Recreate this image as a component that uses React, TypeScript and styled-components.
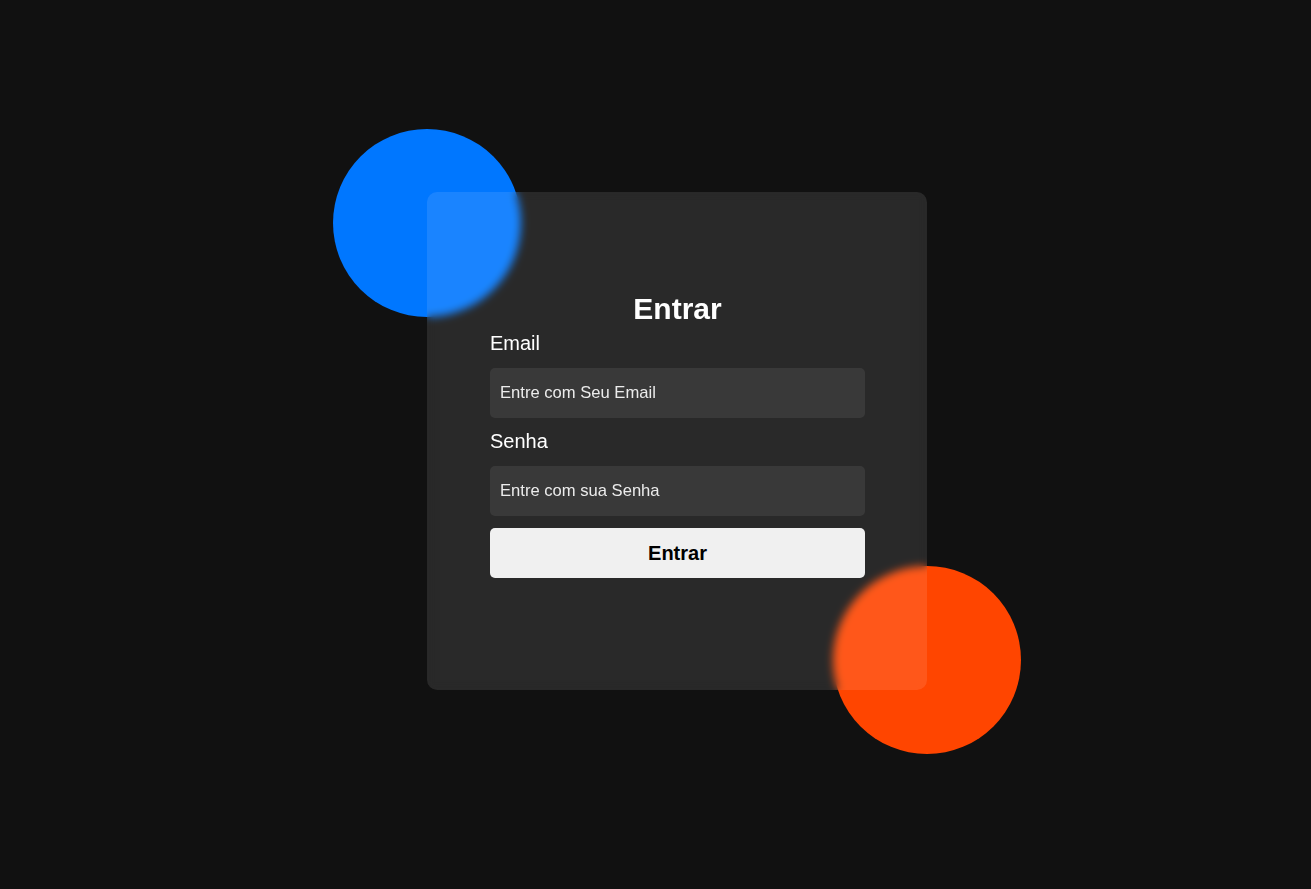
import React from "react";
import styled, { createGlobalStyle } from "styled-components";

const GlobalStyle = createGlobalStyle`
  * { box-sizing: border-box; }
  html, body { margin: 0; padding: 0; background: #111111; }
  body { font-family: "Liberation Sans", Arial, sans-serif; }
`;

const Page = styled.main`
  height: 889px;
  display: flex;
  align-items: center;
  justify-content: center;
  padding-left: 43px;
  padding-bottom: 7px;
  overflow: hidden;
`;

const Stage = styled.div`
  position: relative;
  width: 500px;
  height: 498px;
`;

const Circle = styled.div<{ $color: string; $pos: string }>`
  position: absolute;
  width: 188px;
  height: 188px;
  border-radius: 50%;
  background: ${(p) => p.$color};
  ${(p) => p.$pos}
`;

const Card = styled.section`
  position: relative;
  z-index: 1;
  width: 100%;
  height: 100%;
  border-radius: 10px;
  background: rgba(255, 255, 255, 0.1);
  backdrop-filter: blur(4px);
  -webkit-backdrop-filter: blur(4px);
  padding: 100px 62px 0 63px;
`;

const Form = styled.form`
  display: flex;
  flex-direction: column;
`;

const Title = styled.h2`
  margin: 0 0 7px;
  font-size: 30px;
  line-height: 33px;
  font-weight: 700;
  color: #ffffff;
  text-align: center;
`;

const Label = styled.label`
  font-size: 20px;
  line-height: 23px;
  color: #ffffff;
  margin-bottom: 13px;
`;

const Input = styled.input`
  height: 50px;
  border: none;
  outline: none;
  border-radius: 5px;
  background: rgba(255, 255, 255, 0.08);
  color: #ffffff;
  font-family: "Liberation Sans", Arial, sans-serif;
  font-size: 16.6px;
  padding: 0 10px;
  margin-bottom: 12px;
  &::placeholder {
    color: #ececec;
  }
`;

const Button = styled.button`
  height: 50px;
  border: none;
  border-radius: 5px;
  background: #f0f0f0;
  color: #000000;
  font-family: "Liberation Sans", Arial, sans-serif;
  font-size: 20px;
  font-weight: 700;
  cursor: pointer;
`;

export default function App() {
  return (
    <>
      <GlobalStyle />
      <Page>
        <Stage>
          <Circle $color="#0077ff" $pos="left: -94px; top: -63px;" />
          <Circle $color="#ff4500" $pos="right: -94px; bottom: -64px;" />
          <Card>
            <Form onSubmit={(e) => e.preventDefault()}>
              <Title>Entrar</Title>
              <Label htmlFor="email">Email</Label>
              <Input id="email" type="email" placeholder="Entre com Seu Email" />
              <Label htmlFor="senha">Senha</Label>
              <Input id="senha" type="password" placeholder="Entre com sua Senha" />
              <Button type="submit">Entrar</Button>
            </Form>
          </Card>
        </Stage>
      </Page>
    </>
  );
}
